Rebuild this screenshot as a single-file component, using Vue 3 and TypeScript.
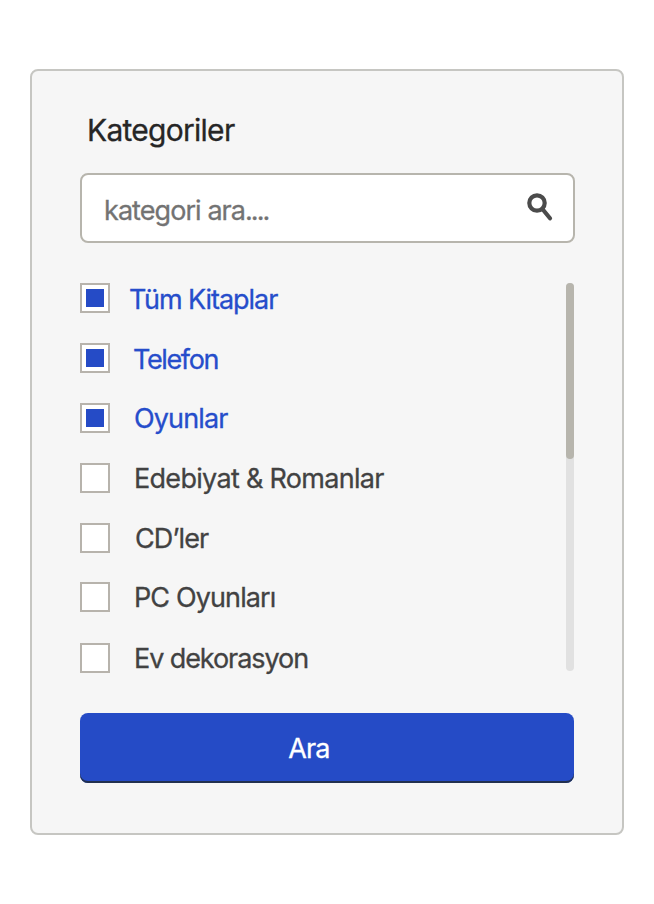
<script setup lang="ts">
import { ref } from 'vue'

interface Category {
  key: string
  label: string
  checked: boolean
}

const query = ref('')
const categories = ref<Category[]>([
  { key: 'all', label: 'Tüm Kitaplar', checked: true },
  { key: 'phone', label: 'Telefon', checked: true },
  { key: 'games', label: 'Oyunlar', checked: true },
  { key: 'novels', label: 'Edebiyat & Romanlar', checked: false },
  { key: 'cds', label: 'CD’ler', checked: false },
  { key: 'pc', label: 'PC Oyunları', checked: false },
  { key: 'decor', label: 'Ev dekorasyon', checked: false },
])
</script>

<template>
  <main class="page">
    <section class="panel">
      <h1 class="title">Kategoriler</h1>
      <div class="search">
        <label class="field">
          <span v-if="!query" class="hint">kategori ara<span class="dots">....</span></span>
          <input v-model="query" class="search-input" type="text" />
        </label>
        <svg class="search-icon" viewBox="0 0 28 30" fill="none" stroke="#4b4b4b">
          <circle cx="12" cy="11" r="7.7" stroke-width="4.2" />
          <path d="M17.6 17.2 L25 26.3" stroke-width="4.2" stroke-linecap="round" />
        </svg>
      </div>
      <div class="list">
        <ul class="items">
          <li v-for="c in categories" :key="c.key" class="item" :class="[c.key, { on: c.checked }]" @click="c.checked = !c.checked">
            <span class="box"><span v-if="c.checked" class="mark"></span></span>
            <span class="label">{{ c.label }}</span>
          </li>
        </ul>
        <div class="track"><div class="thumb"></div></div>
      </div>
      <button class="submit" type="button">Ara</button>
    </section>
  </main>
</template>

<style>
body {
  background: #fff;
}
</style>

<style scoped>
.page {
  box-sizing: border-box;
  height: 904px;
  padding: 69px 30px;
  font-family: Inter, "Liberation Sans", sans-serif;
}
.panel {
  box-sizing: border-box;
  width: 594px;
  height: 766px;
  padding: 40px 48px 50px;
  border: 2px solid #c6c6c2;
  border-radius: 8px;
  background: #f6f6f6;
}
.title {
  margin: 0;
  padding-left: 7px;
  height: 62px;
  line-height: 38px;
  font-size: 30px;
  font-weight: 400;
  letter-spacing: -0.73px;
  color: #262626;
  -webkit-text-stroke: 0.3px currentColor;
}
.search {
  box-sizing: border-box;
  display: flex;
  width: 495px;
  height: 70px;
  padding: 0 20px 0 22px;
  border: 2px solid #b7b5ad;
  border-radius: 8px;
  background: #fff;
}
.field {
  display: grid;
  flex: 1;
  min-width: 0;
  font-size: 27px;
  letter-spacing: -0.93px;
}
.hint,
.search-input {
  grid-area: 1 / 1;
  padding: 5px 0 0;
}
.hint {
  align-self: center;
  color: #737373;
  white-space: nowrap;
  -webkit-text-stroke: 0.3px currentColor;
}
.dots {
  letter-spacing: -2px;
}
.search-input {
  min-width: 0;
  border: 0;
  outline: 0;
  background: transparent;
  font: inherit;
  letter-spacing: inherit;
  color: #4b4b4b;
}
.search-icon {
  width: 28px;
  height: 30px;
  margin-top: 17px;
}
.list {
  display: flex;
  justify-content: space-between;
  height: 390px;
  margin-top: 40px;
}
.items {
  margin: 0;
  padding: 0;
  list-style: none;
}
.item {
  display: flex;
  align-items: flex-start;
  gap: 24px;
  height: 60px;
  font-size: 27px;
  letter-spacing: -0.7px;
  color: #424242;
  cursor: pointer;
}
.item.on {
  color: #264dcb;
}
.item.all {
  gap: 19px;
  letter-spacing: -1.05px;
}
.item.phone {
  gap: 23px;
  letter-spacing: -1.38px;
}
.item.games {
  letter-spacing: -0.85px;
}
.item.cds {
  gap: 25px;
  height: 59px;
  letter-spacing: -0.9px;
}
.item.pc {
  height: 61px;
  letter-spacing: -0.88px;
}
.item.decor {
  letter-spacing: -1.08px;
}
.box {
  box-sizing: border-box;
  display: grid;
  place-items: center;
  width: 30px;
  height: 30px;
  border: 2px solid #b7b3ac;
  background: #fff;
}
.mark {
  width: 18px;
  height: 18px;
  background: #254bc6;
}
.label {
  line-height: 32px;
  white-space: nowrap;
  -webkit-text-stroke: 0.3px currentColor;
}
.all .label,
.phone .label {
  line-height: 34px;
}
.track {
  width: 8px;
  height: 388px;
  border-radius: 4px;
  background: #e1e1e1;
}
.thumb {
  height: 176px;
  border-radius: 4px;
  background: #b7b5ad;
}
.submit {
  display: block;
  width: 494px;
  height: 70px;
  margin-top: 40px;
  padding: 0 36px 0 0;
  border: 0;
  border-radius: 8px;
  background: #254bc6;
  box-shadow: inset 0 -2px 0 #22304f;
  font: 400 27px Inter, "Liberation Sans", sans-serif;
  letter-spacing: -0.9px;
  color: #fff;
  -webkit-text-stroke: 0.3px currentColor;
}
</style>
